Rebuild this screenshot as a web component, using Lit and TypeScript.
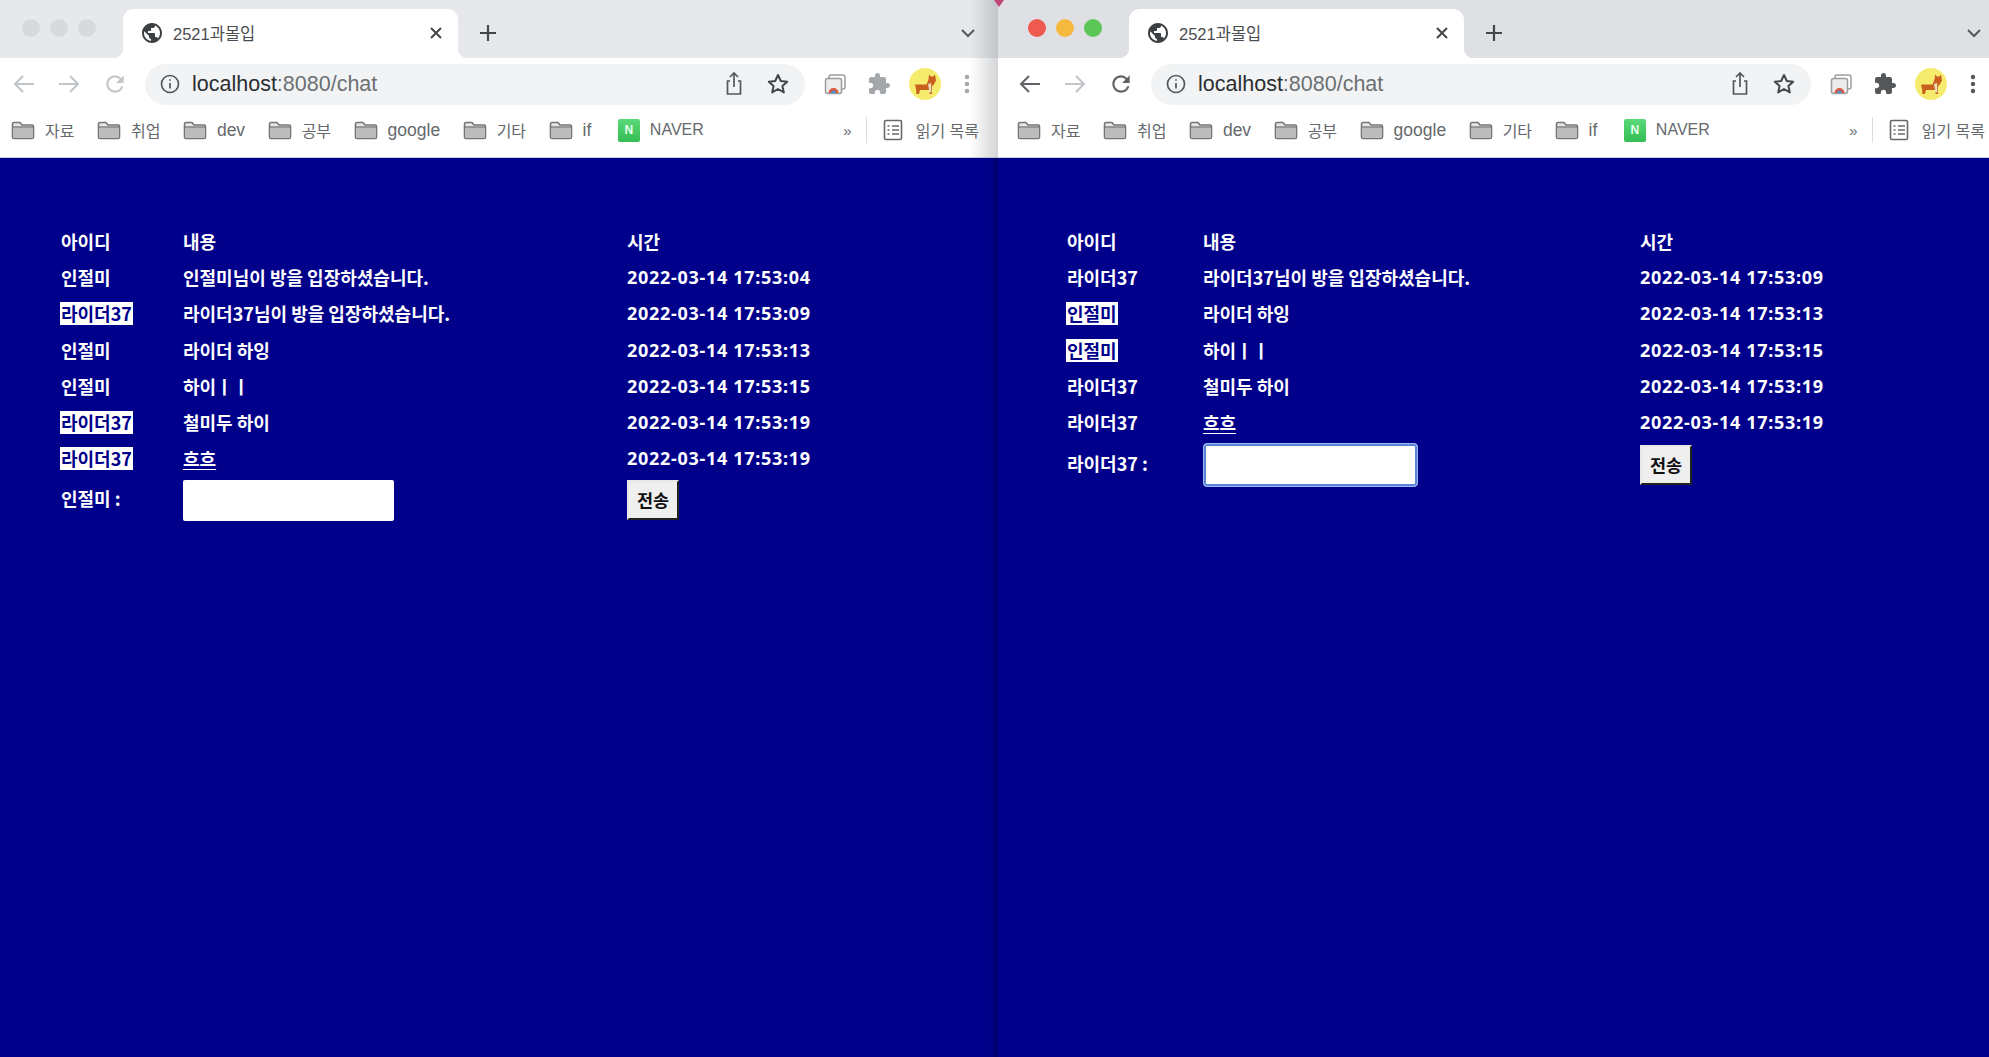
import { LitElement, html, css, svg } from "lit";
import { customElement, property } from "lit/decorators.js";

type Row = { id: string; msg: string; time: string; mine?: boolean; under?: boolean };

const folder = svg`<svg width="24" height="22" viewBox="0 0 24 22"><path d="M1.5 18V5a1.5 1.5 0 0 1 1.5-1.5h6l2 2.5h10a1.5 1.5 0 0 1 1.5 1.5V18a1.5 1.5 0 0 1-1.5 1.5H3A1.5 1.5 0 0 1 1.5 18Z" fill="#e6e6e6" stroke="#757575" stroke-width="1.6"/><path d="M2.3 8.5h19.4V18a.8.8 0 0 1-.8.8H3.1a.8.8 0 0 1-.8-.8Z" fill="#bcbcbc"/><path d="M1.5 8h21" stroke="#757575" stroke-width="1.3"/></svg>`;

const GLOBE = "M12 2C6.48 2 2 6.48 2 12s4.48 10 10 10 10-4.48 10-10S17.52 2 12 2zm-1 17.93c-3.95-.49-7-3.85-7-7.93 0-.62.08-1.21.21-1.79L9 15v1c0 1.1.9 2 2 2v1.93zm6.9-2.54c-.26-.81-1-1.39-1.9-1.39h-1v-3c0-.55-.45-1-1-1H8v-2h2c.55 0 1-.45 1-1V7h2c1.1 0 2-.9 2-2v-.41c2.93 1.19 5 4.06 5 7.41 0 2.08-.8 3.97-2.1 5.39z";
const RELOAD = "M17.65 6.35A7.958 7.958 0 0 0 12 4c-4.42 0-7.99 3.58-7.99 8s3.57 8 7.99 8c3.73 0 6.84-2.55 7.73-6h-2.08A5.99 5.99 0 0 1 12 18c-3.31 0-6-2.69-6-6s2.69-6 6-6c1.66 0 3.14.69 4.22 1.78L13 11h7V4l-2.35 2.35z";
const PUZZLE = "M20.5 11H19V7c0-1.1-.9-2-2-2h-4V3.5C13 2.12 11.88 1 10.5 1S8 2.12 8 3.5V5H4c-1.1 0-1.99.9-1.99 2v3.8H3.5c1.49 0 2.7 1.21 2.7 2.7s-1.21 2.7-2.7 2.7H2V20c0 1.1.9 2 2 2h3.8v-1.5c0-1.49 1.21-2.7 2.7-2.7 1.49 0 2.7 1.21 2.7 2.7V22H17c1.1 0 2-.9 2-2v-4h1.5c1.38 0 2.5-1.12 2.5-2.5S21.88 11 20.5 11z";

@customElement("browser-chrome")
class BrowserChrome extends LitElement {
  @property({ type: Boolean }) inactive = false;
  static styles = css`
    :host { display: block; font-family: "Liberation Sans", "Noto Sans CJK KR", sans-serif; --inset: 8px; --end: 4px; --chev: 7px; }
    :host([inactive]) { --inset: 0px; --end: 19px; --chev: 22px; }
    .tabs { height: 58px; background: #dfe0e4; display: flex; align-items: flex-end; position: relative; }
    :host([inactive]) .tabs { background: #e6e8eb; }
    .lights { width: calc(123px + var(--inset)); padding: 0 0 21px calc(22px + var(--inset)); box-sizing: border-box; display: flex; gap: 10px; }
    .light { width: 18px; height: 18px; border-radius: 50%; }
    .tab { width: 335px; height: 49px; background: #fff; border-radius: 11px 11px 0 0; box-sizing: border-box; padding: 0 14px 2px 17px; display: flex; align-items: center; font-size: 16.5px; color: #4a4d50; position: relative; }
    .tab::before, .tab::after { content: ""; position: absolute; bottom: 0; width: 10px; height: 10px; }
    .tab::before { left: -10px; background: radial-gradient(circle at 0 0, transparent 10px, #fff 10.5px); }
    .tab::after { right: -10px; background: radial-gradient(circle at 100% 0, transparent 10px, #fff 10.5px); }
    .tab span { margin-left: 9px; flex: 1; }
    .plus { margin: 0 0 15px 20px; }
    .chev { margin: 0 var(--chev) 20px auto; }
    .tool { height: 52px; background: #fff; display: flex; align-items: center; }
    .nav { display: flex; width: calc(145px + var(--inset)); box-sizing: border-box; padding-left: calc(12px + var(--inset)); gap: 21px; align-items: center; }
    .url { width: 660px; height: 41px; border-radius: 21px; background: #f1f3f4; display: flex; align-items: center; padding: 0 15px; box-sizing: border-box; font-size: 21.5px; color: #6c7073; }
    .url b { font-weight: 400; color: #2b2d30; }
    .url .host { margin-left: 12px; flex: 1; }
    .url .acts { display: flex; gap: 22px; align-items: center; }
    .ext { display: flex; align-items: center; margin-left: 18px; gap: 20px; }
    .avatar { width: 32px; height: 32px; border-radius: 50%; background: #f5ec6e; display: flex; align-items: center; justify-content: center; margin-left: -2px; }
    .dots { margin-left: 3px; }
    .marks { height: 47px; box-sizing: border-box; padding: 0 var(--end) 7px calc(11px + var(--inset)); background: #fff; display: flex; align-items: center; font-size: 16px; color: #66696c; }
    .mark { display: flex; align-items: center; gap: 10px; margin-right: 22.5px; white-space: nowrap; }
    .mark.site { margin-left: 4px; }
    .latin { font-size: 17.5px; }
    .naver { width: 22px; height: 23px; background: linear-gradient(#5ad978, #35bd55); border-radius: 2px; color: #eafff0; font-weight: 700; font-size: 12px; display: flex; align-items: center; justify-content: center; }
    .right { margin-left: auto; display: flex; align-items: center; }
    .more { margin-right: 14px; font-size: 15px; }
    .sep { width: 1px; height: 26px; background: #dadce0; margin-right: 16px; }
    .read { display: flex; align-items: center; gap: 13px; white-space: nowrap; }
    .edge { height: 1px; background: #c9cfe0; }
  `;
  render() {
    const on = !this.inactive;
    const c = on ? ["#ee5a50", "#f5b93f", "#5cc756"] : ["#d8d9dc", "#d8d9dc", "#d8d9dc"];
    const back = on ? "#5f6368" : "#c1c4c8";
    const reload = on ? "#5f6368" : "#c4c7ca";
    const ink = on ? "#55585b" : "#a4a7ab";
    return html`
      <div class="tabs">
        <div class="lights">${c.map((x) => html`<div class="light" style="background:${x}"></div>`)}</div>
        <div class="tab">
          <svg width="24" height="24" viewBox="0 0 24 24" fill="#3c4043"><path d="${GLOBE}"/></svg>
          <span>2521과몰입</span>
          <svg width="16" height="16" viewBox="0 0 16 16" stroke="#44474a" stroke-width="2"><path d="M3 3l10 10M13 3L3 13"/></svg>
        </div>
        <svg class="plus" width="20" height="20" viewBox="0 0 20 20" stroke="#44474a" stroke-width="2.2"><path d="M10 2v16M2 10h16"/></svg>
        <svg class="chev" width="16" height="10" viewBox="0 0 16 10" fill="none" stroke="#55585b" stroke-width="2"><path d="M2 2l6 6 6-6"/></svg>
      </div>
      <div class="tool">
        <div class="nav">
          <svg width="24" height="24" viewBox="0 0 24 24" fill="none" stroke="${back}" stroke-width="2"><path d="M22 12H3M11 4l-8 8 8 8"/></svg>
          <svg width="24" height="24" viewBox="0 0 24 24" fill="none" stroke="#c1c4c8" stroke-width="2"><path d="M2 12h19M13 4l8 8-8 8"/></svg>
          <svg width="26" height="26" viewBox="0 0 24 24" fill="${reload}"><path d="${RELOAD}"/></svg>
        </div>
        <div class="url">
          <svg width="20" height="20" viewBox="0 0 20 20" fill="none" stroke="#55585b" stroke-width="1.7"><circle cx="10" cy="10" r="8.5"/><path d="M10 9v5.5M10 5.2v1.6"/></svg>
          <div class="host"><b>localhost</b>:8080/chat</div>
          <div class="acts">
            <svg width="20" height="26" viewBox="0 0 20 26" fill="none" stroke="#55585b" stroke-width="1.7"><path d="M6 10H3.5v13h13V10H14M10 16V2M6 6l4-4 4 4"/></svg>
            <svg width="24" height="24" viewBox="0 0 24 24" fill="none" stroke="#45484b" stroke-width="2" stroke-linejoin="round"><path d="M12 3l2.8 6 6.4.7-4.8 4.3 1.4 6.4L12 17l-5.8 3.4 1.4-6.4-4.8-4.3 6.4-.7Z"/></svg>
          </div>
        </div>
        <div class="ext">
          <svg width="24" height="24" viewBox="0 0 24 24" fill="none"><rect x="6" y="3" width="16" height="14" rx="2" stroke="#9a9da1" stroke-width="1.5"/><rect x="2.5" y="6.5" width="16" height="15" rx="2" fill="#ececec" stroke="#9a9da1" stroke-width="1.5"/><path d="M5.5 21a5 5 0 0 1 10 0Z" fill="#d9583f"/><path d="M8 21a2.5 2.5 0 0 1 5 0Z" fill="#4a8fd9"/></svg>
          <svg width="24" height="24" viewBox="0 0 24 24" fill="${ink}"><path d="${PUZZLE}"/></svg>
          <div class="avatar">
            <svg width="28" height="28" viewBox="0 0 28 28"><path d="M4 14.5h11.5l2-5 .5-5 2 2h2.2l1.8-2 1 6-2.5 4.5-1.5 1V24h-2.5v-4H9l-1 4H5.5L5 19Z" fill="#c9601f"/><path d="M17 14l3-1 .5 9-2 1Z" fill="#ecdcb8"/></svg>
          </div>
          <svg class="dots" width="6" height="24" viewBox="0 0 6 24" fill="${ink}"><circle cx="3" cy="5" r="2.2"/><circle cx="3" cy="12" r="2.2"/><circle cx="3" cy="19" r="2.2"/></svg>
        </div>
      </div>
      <div class="marks">
        ${["자료", "취업", "dev", "공부", "google", "기타", "if"].map(
          (m) => html`<div class="mark">${folder}<span class=${/^[a-z]/.test(m) ? "latin" : ""}>${m}</span></div>`
        )}
        <div class="mark site"><div class="naver">N</div><span>NAVER</span></div>
        <div class="right">
          <span class="more">»</span><div class="sep"></div>
          <div class="read">
            <svg width="20" height="22" viewBox="0 0 20 22" fill="none" stroke="#66696c" stroke-width="1.6"><rect x="1.5" y="1.5" width="17" height="19" rx="1.5"/><path d="M4.5 7h2M9 7h7M4.5 11h2M9 11h7M4.5 15h2M9 15h7"/></svg>
            <span>읽기 목록</span>
          </div>
        </div>
      </div>
      <div class="edge"></div>
    `;
  }
}

@customElement("chat-table")
class ChatTable extends LitElement {
  @property({ attribute: false }) rows: Row[] = [];
  @property() me = "";
  @property({ type: Boolean }) focused = false;
  static styles = css`
    :host { display: block; color: #fff; font-family: "Noto Sans CJK KR", "Noto Sans", sans-serif; font-weight: 700; font-size: 18px; }
    .grid { display: grid; grid-template-columns: var(--c1) var(--c2) auto; grid-auto-rows: 36.2px; align-items: center; }
    .mine { background: #fff; color: #00008b; padding: 0 1px; margin-left: -1px; line-height: 23px; display: inline-block; }
    .u { text-decoration: underline; text-underline-offset: 3px; }
    .t { font-family: "Noto Sans", sans-serif; font-size: 18px; letter-spacing: 0.7px; font-weight: 700; }
    .foot { grid-column: 1 / -1; align-self: start; display: grid; grid-template-columns: var(--c1) var(--c2) auto; align-items: center; margin-top: var(--foot); }
    .label { padding-bottom: 4px; }
    input { width: 211px; height: 41px; box-sizing: border-box; border: none; background: #fff; border-radius: 2px; padding: 0; margin: 0; display: block; }
    input.focus { outline: none; box-shadow: inset 0 0 0 2px #5a84d8; border: 1px solid #9ab8f0; height: 44px; width: 215px; border-radius: 4px; }
    button { width: 52px; height: 40px; background: #efefef; border: 2px solid; border-color: #e8e8e8 #222 #222 #e8e8e8; color: #111; font: inherit; font-size: 17.5px; padding: 0; display: block; }
    .footbtn { justify-self: start; align-self: start; margin-top: var(--btn); }
  `;
  render() {
    return html`<div class="grid">
      <div>아이디</div><div>내용</div><div>시간</div>
      ${this.rows.map(
        (r) => html`<div><span class=${r.mine ? "mine" : ""}>${r.id}</span></div>
          <div><span class=${r.under ? "u" : ""}>${r.msg}</span></div>
          <div class="t">${r.time}</div>`
      )}
      <div class="foot">
        <div class="label">${this.me} :</div>
        <div><input class=${this.focused ? "focus" : ""} /></div>
        <div class="footbtn"><button>전송</button></div>
      </div>
    </div>`;
  }
}

@customElement("app-root")
class AppRoot extends LitElement {
  static styles = css`
    :host { display: grid; grid-template-columns: 998px 991px; height: 1057px; overflow: hidden; background: #00008b; position: relative; }
    .win { display: flex; flex-direction: column; min-width: 0; height: 1057px; }
    .page { flex: 1; background: #00008b; }
    .left .page { padding: 65px 0 0 61px; --c1: 122px; --c2: 444px; --foot: 3.6px; --btn: 0px; }
    .right .page { padding: 65px 0 0 69px; --c1: 136px; --c2: 437px; --foot: 2.8px; --btn: 2px; }
    .pin { position: absolute; left: 994px; top: 0; border: 5px solid transparent; border-top: 7px solid #c2487c; border-bottom: 0; }
    .shade { position: absolute; left: 970px; top: 0; width: 28px; height: 158px; background: linear-gradient(90deg, rgba(120,124,130,0), rgba(120,124,130,.32)); pointer-events: none; }
    .shade2 { position: absolute; left: 990px; top: 158px; width: 8px; height: 899px; background: linear-gradient(90deg, rgba(0,0,40,0), rgba(0,0,40,.35)); }
  `;
  private left: Row[] = [
    { id: "인절미", msg: "인절미님이 방을 입장하셨습니다.", time: "2022-03-14 17:53:04" },
    { id: "라이더37", msg: "라이더37님이 방을 입장하셨습니다.", time: "2022-03-14 17:53:09", mine: true },
    { id: "인절미", msg: "라이더 하잉", time: "2022-03-14 17:53:13" },
    { id: "인절미", msg: "하이ㅣㅣ", time: "2022-03-14 17:53:15" },
    { id: "라이더37", msg: "철미두 하이", time: "2022-03-14 17:53:19", mine: true },
    { id: "라이더37", msg: "흐흐", time: "2022-03-14 17:53:19", mine: true, under: true },
  ];
  private right: Row[] = [
    { id: "라이더37", msg: "라이더37님이 방을 입장하셨습니다.", time: "2022-03-14 17:53:09" },
    { id: "인절미", msg: "라이더 하잉", time: "2022-03-14 17:53:13", mine: true },
    { id: "인절미", msg: "하이ㅣㅣ", time: "2022-03-14 17:53:15", mine: true },
    { id: "라이더37", msg: "철미두 하이", time: "2022-03-14 17:53:19" },
    { id: "라이더37", msg: "흐흐", time: "2022-03-14 17:53:19", under: true },
  ];
  render() {
    return html`
      <div class="win left">
        <browser-chrome inactive></browser-chrome>
        <div class="page"><chat-table .rows=${this.left} me="인절미"></chat-table></div>
      </div>
      <div class="win right">
        <browser-chrome></browser-chrome>
        <div class="page"><chat-table .rows=${this.right} me="라이더37" focused></chat-table></div>
      </div>
      <div class="shade"></div><div class="shade2"></div><div class="pin"></div>
    `;
  }
}
